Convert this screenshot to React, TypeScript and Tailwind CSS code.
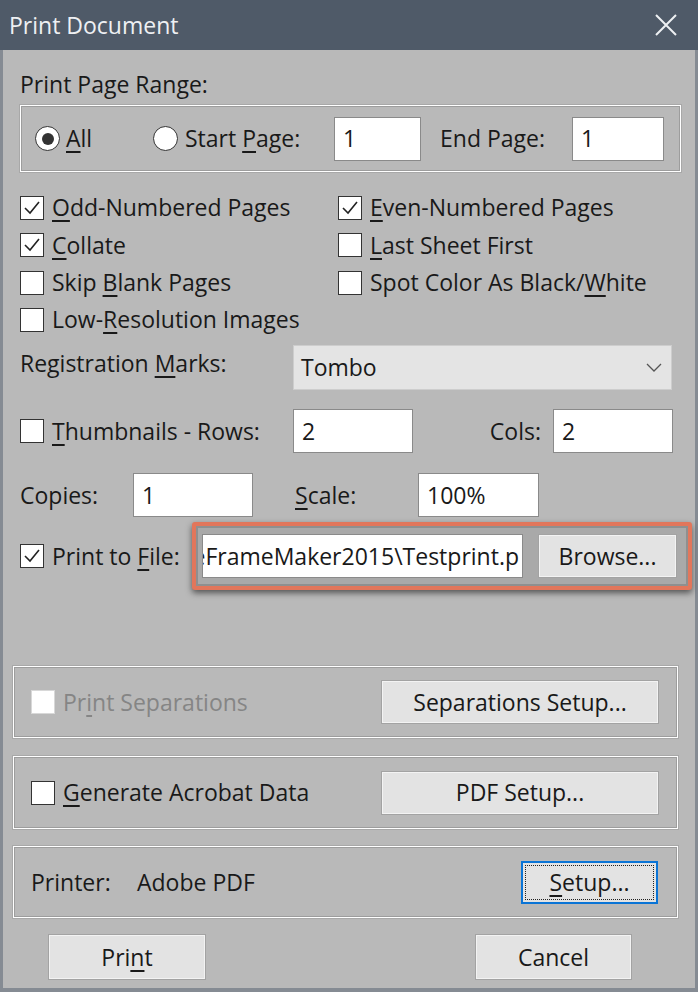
import type { ReactNode } from 'react'

const U = ({ children }: { children: ReactNode }) => (
  <span className="underline decoration-[1.5px] underline-offset-[4px]">{children}</span>
)

function CheckBox({ checked = false, disabled = false }: { checked?: boolean; disabled?: boolean }) {
  return (
    <span
      className={
        'flex h-[24px] w-[24px] shrink-0 items-center justify-center bg-white ' +
        (disabled ? 'border border-[#d8d8d8]' : 'border-[1.5px] border-[#333]')
      }
    >
      {checked && (
        <svg width="18" height="16" viewBox="0 0 18 16">
          <polyline points="2,8 7,13 16,2" fill="none" stroke="#222" strokeWidth="1.6" />
        </svg>
      )}
    </span>
  )
}

function Radio({ checked = false }: { checked?: boolean }) {
  return (
    <span className="flex h-[25px] w-[25px] shrink-0 items-center justify-center rounded-full border-[1.5px] border-[#333] bg-white">
      {checked && <span className="h-[12px] w-[12px] rounded-full bg-[#333]" />}
    </span>
  )
}

function Check({ checked, children, disabled }: { checked?: boolean; children: ReactNode; disabled?: boolean }) {
  return (
    <div className="flex items-center gap-[8px] whitespace-nowrap">
      <CheckBox checked={checked} disabled={disabled} />
      <span className={disabled ? 'text-[#858585]' : ''}>{children}</span>
    </div>
  )
}

function Field({ value, className }: { value: string; className: string }) {
  return (
    <div className={'flex h-[44px] shrink-0 items-center overflow-hidden whitespace-nowrap border border-[#8a8a8a] bg-white ' + className}>
      {value}
    </div>
  )
}

function Button({ children, className }: { children: ReactNode; className: string }) {
  return (
    <div
      className={
        'flex shrink-0 items-center justify-center whitespace-nowrap border border-[#a3a3a3] bg-[#e3e3e3] shadow-[inset_0_0_0_1px_#f3f3f3] ' +
        className
      }
    >
      {children}
    </div>
  )
}

const group = 'flex items-center border border-white shadow-[inset_0_0_0_1px_#9d9d9d,0_0_0_1px_#a8a8a8]'

export default function App() {
  return (
    <div className="flex h-[992px] w-[698px] flex-col bg-[#b9b9b9] font-['Open_Sans',sans-serif] text-[23px] leading-none text-[#191919]">
      <div className="flex h-[50px] shrink-0 items-center justify-between bg-[#4f5a68] pl-[9px] pr-[21px] text-[#eef0f3]">
        <span>Print Document</span>
        <svg width="22" height="22" viewBox="0 0 22 22">
          <path d="M1 1L21 21M21 1L1 21" stroke="#eef0f3" strokeWidth="2" />
        </svg>
      </div>

      <div className="flex flex-1 flex-col border-x-[3px] border-b-[4px] border-[#858b93]">
        <div className="ml-[17px] mt-[20px] flex h-[28px] items-center">Print Page Range:</div>

        <div className={group + ' ml-[17px] mt-[7px] h-[67px] w-[661px] whitespace-nowrap'}>
          <div className="ml-[14px] flex w-[118px] items-center gap-[6px]">
            <Radio checked />
            <span>
              <U>A</U>ll
            </span>
          </div>
          <div className="flex w-[181px] items-center gap-[7px]">
            <Radio />
            <span>
              Start <U>P</U>age:
            </span>
          </div>
          <Field value="1" className="w-[87px] pl-[8px]" />
          <span className="ml-[19px] w-[132px]">End Page:</span>
          <Field value="1" className="w-[92px] pl-[8px]" />
        </div>

        <div className="ml-[17px] mt-[17px] grid grid-cols-[318px_1fr] grid-rows-[37px_38px_37px_37px] items-center">
          <Check checked>
            <U>O</U>dd-Numbered Pages
          </Check>
          <Check checked>
            <U>E</U>ven-Numbered Pages
          </Check>
          <Check checked>
            <U>C</U>ollate
          </Check>
          <Check>
            <U>L</U>ast Sheet First
          </Check>
          <Check>
            Skip <U>B</U>lank Pages
          </Check>
          <Check>
            Spot Color As Black/<U>W</U>hite
          </Check>
          <Check>
            Low-<U>R</U>esolution Images
          </Check>
        </div>

        <div className="ml-[17px] mt-[7px] flex h-[45px] items-center whitespace-nowrap">
          <span className="w-[273px] pb-[9px]">
            Registration <U>M</U>arks:
          </span>
          <div className="flex h-[45px] w-[379px] items-center justify-between border border-[#cdcdcd] bg-[#e4e4e4] pl-[7px] pr-[9px]">
            <span>Tombo</span>
            <svg width="16" height="10" viewBox="0 0 16 10">
              <polyline points="1,1 8,8 15,1" fill="none" stroke="#555" strokeWidth="1.3" />
            </svg>
          </div>
        </div>

        <div className="ml-[17px] mt-[19px] flex h-[44px] items-center whitespace-nowrap">
          <div className="w-[273px] shrink-0">
            <Check>
              <U>T</U>humbnails - Rows:
            </Check>
          </div>
          <Field value="2" className="w-[120px] pl-[8px]" />
          <span className="w-[140px] pr-[12px] text-right">Cols:</span>
          <Field value="2" className="w-[120px] pl-[8px]" />
        </div>

        <div className="ml-[17px] mt-[20px] flex h-[44px] items-center whitespace-nowrap">
          <span className="w-[113px]">Copies:</span>
          <Field value="1" className="w-[120px] pl-[8px]" />
          <span className="w-[165px] pl-[42px]">
            <U>S</U>cale:
          </span>
          <Field value="100%" className="w-[121px] pl-[8px]" />
        </div>

        <div className="ml-[17px] mt-[5px] flex h-[68px] items-center">
          <div className="w-[172px] shrink-0">
            <Check checked>
              Print to <U>F</U>ile:
            </Check>
          </div>
          <div className="flex h-[68px] w-[500px] shrink-0 items-center gap-[15px] rounded-[3px] border-[4px] border-[#e2765b] bg-[#a9a9a9] pl-[6px] shadow-[0_3px_6px_rgba(0,0,0,0.55),inset_0_0_0_2px_#8f8f8f]">
            <Field value="eFrameMaker2015\Testprint.p" className="w-[321px] justify-end pr-[3px]" />
            <Button className="h-[44px] w-[139px]">Browse...</Button>
          </div>
        </div>

        <div className={group + ' ml-[10px] mt-[76px] h-[72px] w-[665px] justify-between pl-[17px] pr-[18px]'}>
          <Check disabled>
            Pr<U>i</U>nt Separations
          </Check>
          <Button className="h-[44px] w-[278px]">Separations Setup...</Button>
        </div>

        <div className={group + ' ml-[10px] mt-[18px] h-[73px] w-[665px] justify-between pl-[17px] pr-[18px]'}>
          <Check>
            <U>G</U>enerate Acrobat Data
          </Check>
          <Button className="h-[44px] w-[278px]">PDF Setup...</Button>
        </div>

        <div className={group + ' ml-[10px] mt-[17px] h-[72px] w-[665px] whitespace-nowrap pl-[17px] pr-[19px]'}>
          <span className="w-[106px]">Printer:</span>
          <span>Adobe PDF</span>
          <div className="ml-auto flex h-[43px] w-[137px] items-center justify-center border-2 border-[#0a74d6] bg-[#e3e3e3] p-[2px]">
            <div className="flex h-full w-full items-center justify-center border border-dotted border-[#222]">
              <span>
                <U>S</U>etup...
              </span>
            </div>
          </div>
        </div>

        <div className="ml-[45px] mt-[16px] flex h-[46px] items-center">
          <Button className="h-[46px] w-[158px]">
            <span>
              Pri<U>n</U>t
            </span>
          </Button>
          <Button className="ml-[269px] h-[46px] w-[157px]">Cancel</Button>
        </div>
      </div>
    </div>
  )
}
